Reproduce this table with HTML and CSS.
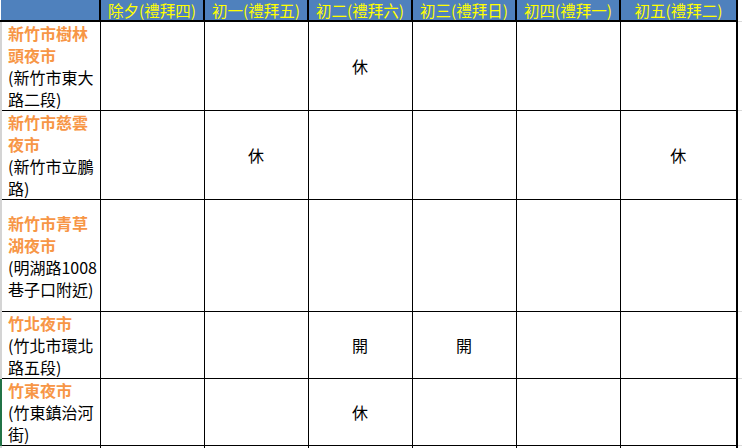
FILE: index.html
```html
<!DOCTYPE html>
<html lang="zh-Hant">
<head>
<meta charset="utf-8">
<title>新竹夜市春節營業</title>
<link rel="stylesheet" href="styles.css">
</head>
<body>
<table class="sheet">
  <colgroup>
    <col class="c-name">
    <col class="c-day"><col class="c-day"><col class="c-day"><col class="c-day"><col class="c-day">
    <col class="c-last">
    <col class="c-gap">
  </colgroup>
  <thead>
    <tr class="head">
      <th class="corner"></th>
      <th>除夕(禮拜四)</th>
      <th>初一(禮拜五)</th>
      <th>初二(禮拜六)</th>
      <th>初三(禮拜日)</th>
      <th>初四(禮拜一)</th>
      <th>初五(禮拜二)</th>
      <th class="gap"></th>
    </tr>
  </thead>
  <tbody>
    <tr class="r1">
      <td class="name"><b>新竹市樹林<br>頭夜市</b><br>(新竹市東大<br>路二段)</td>
      <td></td><td></td><td>休</td><td></td><td></td><td></td><td class="gap"></td>
    </tr>
    <tr class="r2">
      <td class="name"><b>新竹市慈雲<br>夜市</b><br>(新竹市立鵬<br>路)</td>
      <td></td><td>休</td><td></td><td></td><td></td><td>休</td><td class="gap"></td>
    </tr>
    <tr class="r3">
      <td class="name"><b>新竹市青草<br>湖夜市</b><br>(明湖路1008<br>巷子口附近)</td>
      <td></td><td></td><td></td><td></td><td></td><td></td><td class="gap"></td>
    </tr>
    <tr class="r4">
      <td class="name"><b>竹北夜市</b><br>(竹北市環北<br>路五段)</td>
      <td></td><td></td><td>開</td><td>開</td><td></td><td></td><td class="gap"></td>
    </tr>
    <tr class="r5">
      <td class="name sel"><b>竹東夜市</b><br>(竹東鎮治河<br>街)</td>
      <td></td><td></td><td>休</td><td></td><td></td><td></td><td class="gap"></td>
    </tr>
    <tr class="r6">
      <td class="name"></td>
      <td></td><td></td><td></td><td></td><td></td><td></td><td class="gap"></td>
    </tr>
  </tbody>
</table>
</body>
</html>
```

FILE: styles.css
```css
html, body {
  margin: 0;
  padding: 0;
  background: #ffffff;
  overflow: hidden;
}

body {
  width: 742px;
  height: 448px;
  font-family: "Noto Sans CJK TC", "Noto Sans CJK SC", sans-serif;
  color: #000000;
}

.sheet {
  border-collapse: collapse;
  table-layout: fixed;
  width: 742px;
}

.c-name { width: 99px; }
.c-day { width: 104px; }
.c-last { width: 117px; }
.c-gap { width: 6px; }

.head th {
  height: 20px;
  padding: 0;
  background: #4f81bd;
  color: #ffff00;
  font-weight: normal;
  font-size: 15.5px;
  line-height: 20px;
  white-space: nowrap;
  text-align: center;
  border-left: 2px solid #000000;
  border-right: 2px solid #000000;
  border-bottom: 2px solid #000000;
}

.head th.corner {
  border-left: none;
}

.head th.gap {
  background: #ffffff;
  border-left: 2px solid #000000;
  border-right: none;
  border-bottom: 1px solid #d9d9d9;
}

tbody td {
  padding: 0;
  border: 1px solid #000000;
  text-align: center;
  vertical-align: middle;
  font-size: 16px;
  line-height: 22px;
}

tbody td.gap {
  border-right: none;
  border-top: 1px solid #d9d9d9;
  border-bottom: 1px solid #d9d9d9;
  border-left: 2px solid #000000;
}

tbody td.name {
  text-align: left;
  padding-left: 6px;
  border-left: 2px solid #d4d4d4;
  white-space: nowrap;
}

tbody td.name.sel {
  border-left: 2px solid #217346;
}

.name b {
  color: #f79646;
  font-weight: bold;
}

.r1 { height: 87px; }
.r2 { height: 87px; }
.r3 { height: 112px; }
.r4 { height: 65px; }
.r5 { height: 66px; }
.r6 { height: 20px; }
```
